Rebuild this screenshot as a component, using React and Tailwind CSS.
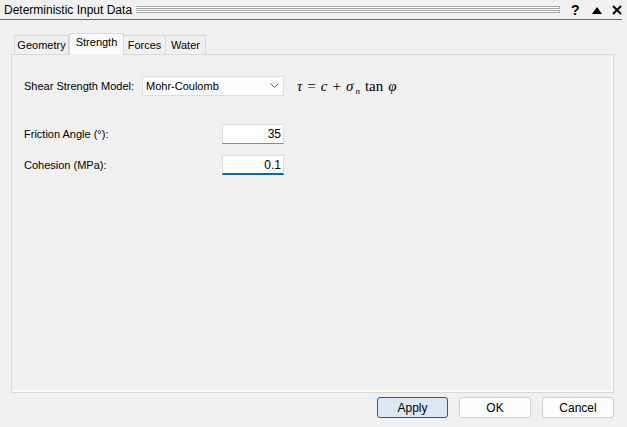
import React, { useState } from 'react';

const tabs = [
    { name: 'Geometry', w: 'w-[55px]' },
    { name: 'Strength', w: 'w-[55px]' },
    { name: 'Forces', w: 'w-[42px]' },
    { name: 'Water', w: 'w-[40px]' },
];

const Field = ({ label, value, focused }) => (
    <div className="flex items-center h-[20px]">
        <div className="w-[198px] whitespace-nowrap">{label}</div>
        <div
            className={`w-[62px] h-[20px] bg-white border border-[#dcdcdc] flex items-center justify-end pr-[2px] text-[12px] ${
                focused ? 'border-b-2 border-b-[#0067c0]' : 'border-b-[#8a8a8a]'
            }`}
        >
            {value}
        </div>
    </div>
);

const App = () => {
    const [active, setActive] = useState('Strength');

    return (
        <div
            className="w-[627px] h-[427px] bg-[#f0f0f0] text-[11px] text-black flex flex-col overflow-hidden"
            style={{ fontFamily: '"Liberation Sans", Arial, sans-serif' }}
        >
            {/* title bar */}
            <div className="h-[20px] w-[622px] border-b border-[#6b6b6b] flex items-center pl-[4px] text-[12px]">
                <span className="leading-none">Deterministic Input Data</span>
                <div className="ml-[4px] w-[424px] flex flex-col gap-[1px]">
                    <div className="h-[3px] border-y border-r border-[#a8a8a8] bg-white"></div>
                    <div className="h-[3px] border-y border-r border-[#a8a8a8] bg-white"></div>
                </div>
                <span className="ml-[11px] font-bold text-[14px] leading-none">?</span>
                <svg className="ml-[12px]" width="10" height="8" viewBox="0 0 10 8">
                    <polygon points="0,8 5,1 10,8" fill="#000" />
                </svg>
                <svg className="ml-[10px]" width="10" height="10" viewBox="0 0 10 10">
                    <path d="M1 1 L9 9 M9 1 L1 9" stroke="#000" strokeWidth="2" />
                </svg>
            </div>

            {/* tabs */}
            <div className="ml-[14px] mt-[13px] flex items-end h-[21px] relative z-10">
                {tabs.map((t) =>
                    t.name === active ? (
                        <button
                            key={t.name}
                            onClick={() => setActive(t.name)}
                            className={`${t.w} h-[22px] bg-[#f9f9f9] border border-b-0 border-[#d9d9d9] -mb-px leading-none pb-[4px] whitespace-nowrap`}
                        >
                            {t.name}
                        </button>
                    ) : (
                        <button
                            key={t.name}
                            onClick={() => setActive(t.name)}
                            className={`${t.w} h-[19px] bg-[#f0f0f0] border border-b-0 border-l-0 first:border-l border-[#d9d9d9] leading-none whitespace-nowrap`}
                        >
                            {t.name}
                        </button>
                    )
                )}
            </div>

            {/* panel */}
            <div className="ml-[11px] w-[603px] h-[339px] border border-[#d9d9d9]">
                <div className="h-full border-r-2 border-b-2 border-[#fbfbfb] pl-[12px] pt-[21px]">
                    <div className="flex items-center h-[20px]">
                        <div className="w-[118px] whitespace-nowrap">Shear Strength Model:</div>
                        <div className="w-[142px] h-[20px] bg-[#fdfdfd] border border-[#dedede] flex items-center pl-[3px] pr-[4px]">
                            <span className="flex-1">Mohr-Coulomb</span>
                            <svg width="9" height="6" viewBox="0 0 9 6">
                                <path d="M0.5 0.5 L4.5 4.5 L8.5 0.5" fill="none" stroke="#606060" strokeWidth="1" />
                            </svg>
                        </div>
                        <div
                            className="ml-[13px] text-[15px] flex items-baseline"
                            style={{ fontFamily: '"Liberation Serif", "Times New Roman", serif' }}
                        >
                            <i>τ</i>
                            <span className="mx-[5px]">=</span>
                            <i>c</i>
                            <span className="mx-[5px]">+</span>
                            <i>σ</i>
                            <i className="text-[9px] relative top-[3px] ml-[2px]">n</i>
                            <span className="ml-[5px]">tan</span>
                            <i className="ml-[5px]">φ</i>
                        </div>
                    </div>

                    <div className="mt-[28px] flex flex-col gap-[11px]">
                        <Field label="Friction Angle (°):" value="35" />
                        <Field label="Cohesion (MPa):" value="0.1" focused />
                    </div>
                </div>
            </div>

            {/* buttons */}
            <div className="mt-[4px] flex justify-end gap-[11px] pr-[13px] text-[12px]">
                <button className="w-[71px] h-[21px] rounded-[3px] border border-[#0067c0] bg-[#dbe7f3]">Apply</button>
                <button className="w-[72px] h-[21px] rounded-[3px] border border-[#d0d0d0] bg-[#fdfdfd]">OK</button>
                <button className="w-[72px] h-[21px] rounded-[3px] border border-[#d0d0d0] bg-[#fdfdfd]">Cancel</button>
            </div>
        </div>
    );
};

export default App;
